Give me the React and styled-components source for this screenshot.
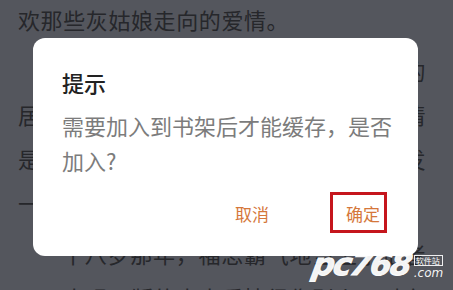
import React from 'react';
import styled, { createGlobalStyle } from 'styled-components';

const GlobalStyle = createGlobalStyle`
  html, body { margin: 0; padding: 0; background: #54565d; overflow: hidden; }
  body { width: 453px; height: 290px; font-family: "Noto Sans CJK SC", "Noto Sans", sans-serif; }
`;

const Page = styled.div`position: relative; width: 453px; height: 290px; overflow: hidden; background: #54565d;`;
const Article = styled.div`margin-top: -3px; padding: 0 27px 0 18px;`;
const Paragraph = styled.p`
  margin: 0 0 7px; font-size: 22px; line-height: 44px; letter-spacing: 0.6px; color: #26272b;
  text-align: justify; text-indent: ${({ indent }) => (indent ? '2em' : '0')};
`;

// --- dialog sits on top of the dimmed page ---
const Dialog = styled.div`
  position: absolute; left: 33px; top: 38px; width: 385px; box-sizing: border-box;
  background: #fff; border-radius: 12px; padding: 29px 22px 22px 29px;
  display: flex; flex-direction: column;
`;
const Title = styled.div`font-size: 22px; line-height: 30px; font-weight: 500; color: #222;`;
const Message = styled.div`margin-top: 11px; font-size: 22px; line-height: 35px; color: #7c7c7c;`;
const Actions = styled.div`margin-top: 14px; display: flex; justify-content: flex-end; gap: 45px;`;
const Button = styled.div`
  position: relative; height: 42px; padding: 0 16px; display: flex; align-items: center;
  font-size: 17px; color: #d5773b;
  ${({ marked }) => marked && `
    &::after { content: ''; position: absolute; left: 0; top: 0; width: 57px; height: 41px; box-sizing: border-box; border: 3px solid #c5161d; }
  `}
`;

// --- site watermark ---
const Watermark = styled.div`position: absolute; left: 313px; top: 247px; display: flex; align-items: flex-start; gap: 3px; color: rgba(255,255,255,0.95);`;
const MarkLogo = styled.span`
  display: inline-block; transform: skewX(-10deg);
  font-family: "DejaVu Sans", sans-serif; font-weight: 700; font-style: italic; font-size: 31px; line-height: 34px; letter-spacing: -1.5px;
  -webkit-text-stroke: 1px rgba(255,255,255,0.95);
`;
const MarkSide = styled.div`display: flex; flex-direction: column; padding-top: 8px; gap: 1px;`;
const MarkTag = styled.span`font-size: 8px; line-height: 9px; padding: 0 1px; border: 1px solid rgba(255,255,255,0.9); color: #fff;`;
const MarkCom = styled.span`font-family: "DejaVu Sans", sans-serif; font-style: italic; font-size: 12px; line-height: 12px;`;

export default function App() {
  return (
    <Page>
      <GlobalStyle />
      <Article>
        <Paragraph>欢那些灰姑娘走向的爱情。</Paragraph>
        <Paragraph indent>她一直相信，自己终会遇见属于她的居然会在某个夏天，遇见一场美好的爱情是他让她明白，原来真正的爱情也会萌发一样，让人难以忘怀。</Paragraph>
        <Paragraph indent>十八岁那年，福思霸气地当上了记者子，出现了版的古中爱情很像别人，对方</Paragraph>
      </Article>
      <Dialog>
        <Title>提示</Title>
        <Message>需要加入到书架后才能缓存，是否加入?</Message>
        <Actions>
          <Button>取消</Button>
          <Button marked>确定</Button>
        </Actions>
      </Dialog>
      <Watermark>
        <MarkLogo>pc768</MarkLogo>
        <MarkSide>
          <MarkTag>软件站</MarkTag>
          <MarkCom>.com</MarkCom>
        </MarkSide>
      </Watermark>
    </Page>
  );
}
